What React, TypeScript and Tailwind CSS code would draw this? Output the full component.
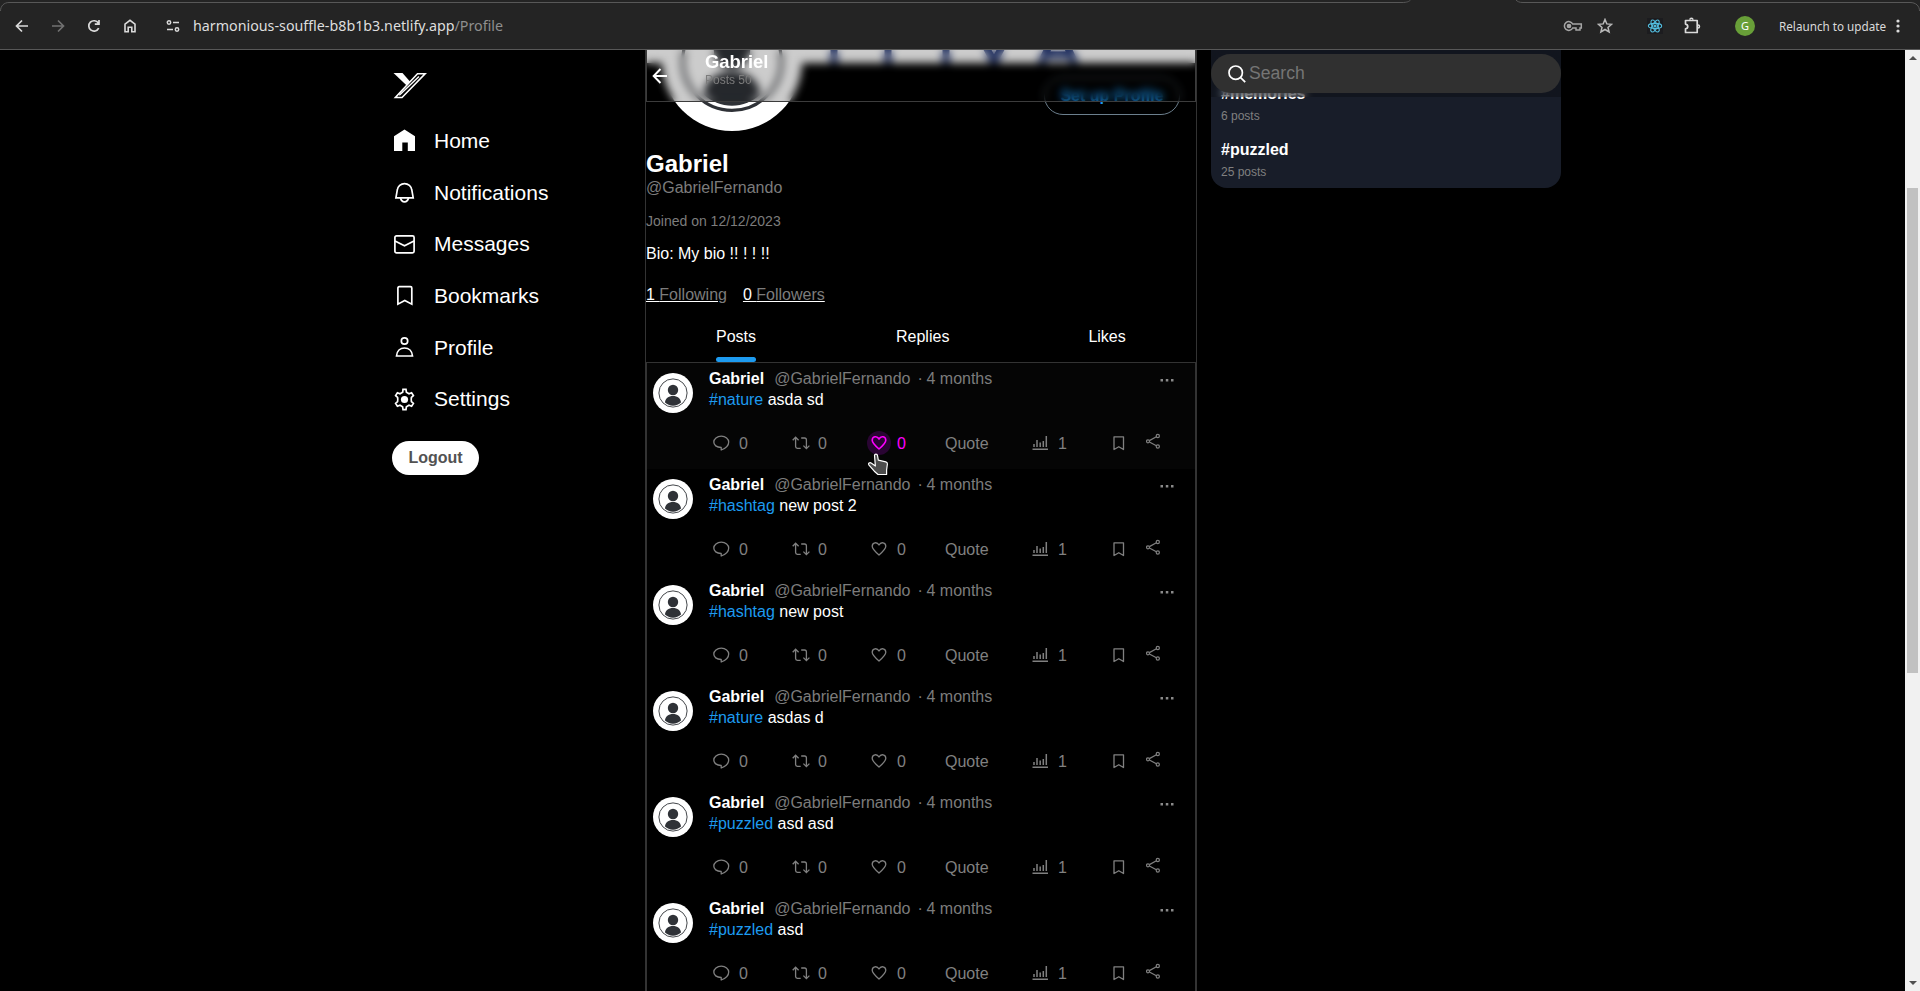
import React from "react";

type Post = { tag: string; text: string; hovered?: boolean };

const posts: Post[] = [
  { tag: "#nature", text: "asda sd", hovered: true },
  { tag: "#hashtag", text: "new post 2" },
  { tag: "#hashtag", text: "new post" },
  { tag: "#nature", text: "asdas d" },
  { tag: "#puzzled", text: "asd asd" },
  { tag: "#puzzled", text: "asd" },
];

function Avatar({ className }: { className: string }) {
  return (
    <svg viewBox="0 0 40 40" className={className}>
      <circle cx="20" cy="20" r="20" fill="#fff" />
      <circle cx="20" cy="20" r="14.1" fill="none" stroke="#2f3237" strokeWidth="0.9" />
      <circle cx="20" cy="17" r="5.2" fill="#2f3237" />
      <path d="M12 29.6C12 25.6 15.6 23 20 23s8 2.6 8 6.6c-2 2-5 3.2-8 3.2s-6-1.200-8-3.200z" fill="#2f3237" />
    </svg>
  );
}

function BrowserBar() {
  return (
    <header className="relative z-30 flex h-[50px] shrink-0 items-center border-b border-[#585858] bg-[#242424] pt-[3px] font-['Noto_Sans',sans-serif] text-[#dadada]">
      <svg className="absolute left-0 top-0" width="1920" height="12" fill="none" stroke="#585858">
        <path d="M0.500 11C0.500 6 4 2.500 9 2.500H1402c5 0 7-1 8.500-2.500M1516 0c1.500 1.500 3 2.500 7 2.500H1910c6 0 9.500 3.500 9.500 8.500" />
      </svg>
      <svg className="ml-3.5" width="16" height="16" viewBox="0 0 16 16" fill="none" stroke="#dadada" strokeWidth="1.7">
        <path d="M14 8H3M8 2.500 2.500 8 8 13.500" />
      </svg>
      <svg className="ml-5" width="16" height="16" viewBox="0 0 16 16" fill="none" stroke="#717171" strokeWidth="1.700">
        <path d="M2 8h11M8 2.500 13.500 8 8 13.500" />
      </svg>
      <svg className="ml-5" width="16" height="16" viewBox="0 0 16 16" fill="none" stroke="#dadada" strokeWidth="1.700">
        <path d="M12.700 10.200A5.200 5.200 0 1 1 12.300 5M13 2v4.200H8.800" />
      </svg>
      <svg className="ml-5" width="16" height="16" viewBox="0 0 16 16" fill="none" stroke="#dadada" strokeWidth="1.600">
        <path d="M3 6.200 8 2.300l5 3.900v7.500H9.800V9.300H6.200v4.400H3z" />
      </svg>
      <svg className="ml-[27px]" width="16" height="16" viewBox="0 0 16 16" fill="none" stroke="#dadada" strokeWidth="1.500">
        <circle cx="4" cy="4.500" r="1.700" />
        <path d="M8 4.500h6M2 11.500h6" />
        <circle cx="12" cy="11.500" r="1.700" />
      </svg>
      <div className="ml-3 whitespace-pre text-[14.270px] leading-5 text-[#dedede]">
        harmonious-souffle-b8b1b3.netlify.app<span className="text-[#8f8f8f]">/Profile</span>
      </div>
      <div className="ml-auto flex items-center">
        <svg width="20" height="16" viewBox="0 0 20 16" fill="none" stroke="#a5a5a5" strokeWidth="1.500">
          <path d="M9.700 6A4.400 4.400 0 1 0 9.700 10H13v2h4v-2h1.300V6z" />
          <circle cx="6" cy="8" r="1.600" fill="#a5a5a5" />
        </svg>
        <svg className="ml-3.5" width="16" height="16" viewBox="0 0 16 16" fill="none" stroke="#b8b8b8" strokeWidth="1.500">
          <path d="m8 1.500 1.800 4.400 4.700.4L11 9.400l1.100 4.600L8 11.500 3.900 14 5 9.400 1.500 6.300l4.700-.4z" />
        </svg>
        <svg className="ml-[34px] bg-[#1c1c1f]" width="16" height="16" viewBox="0 0 16 16" fill="none" stroke="#53bfe0" strokeWidth="1.100">
          <ellipse cx="8" cy="8" rx="6.700" ry="2.600" />
          <ellipse cx="8" cy="8" rx="6.700" ry="2.600" transform="rotate(60 8 8)" />
          <ellipse cx="8" cy="8" rx="6.700" ry="2.600" transform="rotate(120 8 8)" />
          <circle cx="8" cy="8" r="1" fill="#53bfe0" />
        </svg>
        <svg className="ml-5" width="18" height="18" viewBox="0 0 18 18" fill="none" stroke="#dadada" strokeWidth="1.700" strokeLinejoin="round">
          <path d="M2.500 3.500h11.700v12H2.500v-3.600c3-.5 3-4.300 0-4.800z" />
          <path d="M6.900 2.800a1.500 1.500 0 0 1 3 0M15 8a1.500 1.500 0 0 1 0 3" strokeWidth="1.500" />
        </svg>
        <div className="ml-[34px] flex size-5 items-center justify-center rounded-full bg-[#689f38] text-[11px] text-white">G</div>
        <div className="ml-6 w-[107px] whitespace-nowrap text-[11.700px] leading-5">Relaunch to update</div>
        <svg className="ml-2.5 mr-5" width="4" height="16" fill="#dadada">
          <circle cx="2" cy="3" r="1.600" />
          <circle cx="2" cy="8" r="1.600" />
          <circle cx="2" cy="13" r="1.600" />
        </svg>
      </div>
    </header>
  );
}

const navIcons: { label: string; icon: React.ReactNode }[] = [
  { label: "Home", icon: <path d="M1 22V7.300L11.500 0.400 22 7.300V22h-7.200v-8.500H9.300V22z" fill="#fff" stroke="none" /> },
  {
    label: "Notifications",
    icon: (
      <>
        <path d="M4.300 9a7.300 7.300 0 0 1 14.500 0l1.400 7.800H2.900z" />
        <path d="M7.500 17c.6 2.700 2 3.800 4 3.800s3.400-1.100 4-3.800" />
      </>
    ),
  },
  {
    label: "Messages",
    icon: (
      <>
        <rect x="1.900" y="2.800" width="19.200" height="17" rx="1.600" />
        <path d="m2 8 9.500 4.700L21 8" />
      </>
    ),
  },
  { label: "Bookmarks", icon: <path d="M4.900 4q0-1.300 1.300-1.300h11.300q1.300 0 1.300 1.300v16.200l-7-3.700-6.900 3.700z" /> },
  {
    label: "Profile",
    icon: (
      <>
        <circle cx="11.500" cy="5" r="3.200" />
        <path d="M3.500 20c.4-4.900 3.700-8 8-8s7.600 3.100 8 8z" />
      </>
    ),
  },
  {
    label: "Settings",
    icon: (
      <>
        <path d="M9.700 4.300 10 1.400h3l.4 2.900 2.600 1.500 2.600-1.100 1.800 2.900-2 1.900q-.4 2 0 4l2 1.900-1.800 2.900-2.600-1.100-2.600 1.500-.4 2.900h-3l-.4-2.900L7 17.200l-2.600 1.100-1.800-2.900 2-1.900q.4-2 0-4l-2-1.900 1.800-2.900L7 5.800z" />
        <circle cx="11.500" cy="11.500" r="3.600" fill="#fff" stroke="none" />
      </>
    ),
  },
];

function Sidebar() {
  return (
    <nav className="flex w-[253px] shrink-0 flex-col pt-[23px]">
      <svg className="ml-px" width="35" height="26" viewBox="0 0 35 26">
        <path d="M0.500 0h9l7.700 8.700-3.500 3.900z" fill="#fff" />
        <path d="M24.500 0.800h7.600L9 24.500H2.400z" fill="none" stroke="#fff" strokeWidth="1.600" />
        <path d="M26 3.600 6.300 22.300" stroke="#fff" strokeWidth="1.400" />
      </svg>
      <ul className="mt-[16px]">
        {navIcons.map((item) => (
          <li key={item.label} className="flex h-[51.700px] items-center gap-5">
            <svg className="ml-px" width="23" height="23" viewBox="0 0 23 23" fill="none" stroke="#fff" strokeWidth="1.700">
              {item.icon}
            </svg>
            <span className="-ml-[2px] text-[21px] leading-6">{item.label}</span>
          </li>
        ))}
      </ul>
      <button className="mt-[16px] h-[34px] w-[87px] rounded-full bg-white text-base font-bold leading-none text-[#525252]">Logout</button>
    </nav>
  );
}

function PostRow({ post }: { post: Post }) {
  return (
    <article className={post.hovered ? "relative flex h-[106px] bg-[#050505]" : "relative flex h-[106px]"}>
      <Avatar className="ml-[6px] mt-[10px] size-10 shrink-0" />
      <div className="ml-4 flex-1 pt-[5px] leading-[21px]">
        <div className="flex text-[#7c7c7c]">
          <b className="text-white">Gabriel</b>
          <span className="ml-[10px]">@GabrielFernando</span>
          <span className="ml-[7px] w-[9px]">·</span>
          <span>4 months</span>
          <svg className="ml-auto mr-[21px] mt-[9px]" width="14" height="6" fill="#8a8a8a">
            <rect x="0.500" y="2" width="2.500" height="2.500" />
            <rect x="5.800" y="2" width="2.500" height="2.500" />
            <rect x="11" y="2" width="2.500" height="2.500" />
          </svg>
        </div>
        <p>
          <span className="text-[#1d9bf0]">{post.tag}</span> {post.text}
        </p>
        <div className="mt-[21px] grid h-6 grid-cols-[79px_80px_73px_87px_81px_33px_16px] items-center pl-1 text-[#808080]">
          <div className="flex items-center">
            <svg width="17" height="16" viewBox="0 0 17 16" fill="none" stroke="currentColor" strokeWidth="1.300">
              <path d="M8.200 12.500C3.500 12.500 0.800 10 0.800 7S4 1.200 8.300 1.200 15.700 3.800 15.700 7c0 3.500-3.500 6.500-7.500 8z" strokeLinejoin="round" />
            </svg>
            <span className="ml-[9px]">0</span>
          </div>
          <div className="flex items-center">
            <svg width="18" height="16" viewBox="0 0 18 16" fill="none" stroke="currentColor" strokeWidth="1.300">
              <path d="M0.700 5.300 3.600 2.200l3 3.100M3.600 2.500v9q0 1.800 1.800 1.800h3.300M9.200 3h3.300q1.900 0 1.900 1.900v8.400M11.400 10.600l3 3 3-3" />
            </svg>
            <span className="ml-2">0</span>
          </div>
          <div className={post.hovered ? "-ml-[5px] flex items-center text-[#ff00ff]" : "-ml-[5px] flex items-center"}>
            <span className={post.hovered ? "flex size-6 items-center justify-center rounded-full bg-[#2a0533]" : "flex size-6 items-center justify-center"}>
              <svg width="16" height="16" viewBox="0 0 16 16" fill="none" stroke="currentColor" strokeWidth={post.hovered ? 1.6 : 1.3}>
                <path d="M8 14C4 10.600 1.200 8.200 1.200 5.300 1.200 1.400 6 .4 8 4c2-3.600 6.800-2.600 6.800 1.300C14.800 8.200 12 10.600 8 14z" strokeLinejoin="round" />
              </svg>
            </span>
            <span className="ml-1.5">0</span>
          </div>
          <span>Quote</span>
          <div className="flex items-center">
            <svg width="17" height="16" viewBox="0 0 17 16" fill="none" stroke="currentColor" strokeWidth="1.500">
              <path d="M2 9v3M5 5v7M8.200 7.500V12M11.300 6v6M14.300 1v11M0.500 14.300h15.500" />
            </svg>
            <span className="ml-[9px]">1</span>
          </div>
          <svg width="12" height="16" viewBox="0 0 12 16" fill="none" stroke="currentColor" strokeWidth="1.300">
            <path d="M1 1.800h9.500v12.700L5.800 11.700 1 14.500z" strokeLinejoin="round" />
          </svg>
          <svg className="-mt-1" width="15" height="16" viewBox="0 0 15 16" fill="none" stroke="currentColor" strokeWidth="1.200">
            <circle cx="2" cy="8.300" r="1.500" />
            <circle cx="11.800" cy="3" r="1.600" />
            <circle cx="11.800" cy="13.500" r="1.600" />
            <path d="m3.400 7.600 7-3.800M3.400 9l7 3.800" />
          </svg>
        </div>
      </div>
      {post.hovered && (
        <svg className="absolute left-[220px] top-[90px] z-10" width="22" height="23" viewBox="0 0 22 23">
          <path
            d="M7.500 2.500C7.500 0.600 10.300 0.600 10.500 2.500L11.300 7.200 18.800 8.800Q20.500 9.300 20.400 11L19.600 17v4.500H11L7.300 18.200 2 12.200C0.600 10.300 2.800 9 4.500 10.200L8.400 13z"
            fill="#4d4d4d"
            stroke="#fff"
            strokeWidth="1.200"
            strokeLinejoin="round"
          />
        </svg>
      )}
    </article>
  );
}

function Feed() {
  return (
    <main className="relative w-[552px] shrink-0 border-x border-[#333333]">
      <div className="absolute inset-x-0 top-0 z-20 flex h-[52px] border border-t-0 border-[#3c3c3c] bg-black/20 backdrop-blur-[4px]">
        <svg className="ml-[5px] mt-[18px]" width="16" height="16" viewBox="0 0 16 16" fill="none" stroke="#fff" strokeWidth="2">
          <path d="M15 8H2M8.500 1 1.700 8l6.800 7" />
        </svg>
        <div className="ml-[37px]">
          <div className="mt-px text-[18.400px] font-bold leading-[22px]">Gabriel</div>
          <div className="text-xs leading-[14px] text-[#7c7c7c]">Posts 50</div>
        </div>
      </div>

      <div className="h-[13px] overflow-hidden bg-white">
        <svg width="550" height="13" fill="none" stroke="#1f3371" strokeWidth="7">
          <path d="M188 0v13M242 0v13M300 0v13M334-14 348 12 362-14M395 13 405-8M429 13 419-8M398 5h28" />
        </svg>
      </div>
      <div className="flex h-[68px] justify-between">
        <Avatar className="-mt-[72px] ml-4 size-[140px]" />
        <button className="mr-[16px] mt-[14px] h-[38px] w-[136px] rounded-full border border-[#6c7f8d] text-base font-bold text-[#1d9bf0]">Set up Profile</button>
      </div>
      <h1 className="mt-[19px] text-2xl font-bold leading-7">Gabriel</h1>
      <p className="leading-5 text-[#7c7c7c]">@GabrielFernando</p>
      <p className="mt-[15px] text-sm leading-4 text-[#7c7c7c]">Joined on 12/12/2023</p>
      <p className="mt-[15px] leading-5">Bio: My bio !! ! ! !!</p>
      <div className="mt-[21px] flex gap-4 leading-5">
        <span className="underline">1 <span className="text-[#7c7c7c]">Following</span></span>
        <span className="underline">0 <span className="text-[#7c7c7c]">Followers</span></span>
      </div>
      <div className="mt-[22px] flex h-[35px] leading-5">
        <div className="ml-[70px] flex flex-col justify-between">
          Posts
          <span className="h-[5px] rounded-full bg-[#1d9bf0]" />
        </div>
        <div className="ml-[140px]">Replies</div>
        <div className="ml-[139px]">Likes</div>
      </div>
      <section className="border border-b-0 border-[#333333]">
        {posts.map((post, i) => (
          <PostRow key={i} post={post} />
        ))}
      </section>
    </main>
  );
}

function Trends() {
  return (
    <aside className="relative ml-[14px] h-[138px] w-[350px] rounded-b-2xl bg-[#181d29] px-2.5 pt-[34px]">
      <div className="absolute inset-x-0 top-0 z-10 h-[47px] bg-black/25 pt-1 backdrop-blur-[4px]">
        <div className="flex h-[39px] items-center rounded-full bg-[#303030] pl-[17px] text-[17.600px] text-[#757575]">
          <svg className="mr-[3px]" width="18" height="18" viewBox="0 0 18 18" fill="none" stroke="#fff" strokeWidth="1.700">
            <circle cx="7.700" cy="7.700" r="6.700" />
            <path d="m12.400 12.400 4.800 4.800" />
          </svg>
          Search
        </div>
      </div>
      <div className="font-bold leading-5">#memories</div>
      <div className="mt-1 text-xs leading-4 text-[#808080]">6 posts</div>
      <div className="mt-4 font-bold leading-5">#puzzled</div>
      <div className="mt-1 text-xs leading-4 text-[#808080]">25 posts</div>
    </aside>
  );
}

function Scrollbar() {
  return (
    <div className="ml-auto flex w-[15px] flex-col items-center bg-[#f1f1f1] py-1.5">
      <svg width="8" height="4" fill="#505050"><path d="M0 4 4 0l4 4z" /></svg>
      <div className="mt-[128px] h-[485px] w-[11px] bg-[#c1c1c1]" />
      <svg className="mt-auto" width="8" height="4" fill="#505050"><path d="M0 0l4 4 4-4z" /></svg>
    </div>
  );
}

export default function App() {
  return (
    <div className="flex h-[991px] w-[1920px] flex-col overflow-hidden bg-black font-['Liberation_Sans',Arial,sans-serif] text-base text-white">
      <BrowserBar />
      <div className="flex h-[941px] overflow-hidden pl-[392px]">
        <Sidebar />
        <Feed />
        <Trends />
        <Scrollbar />
      </div>
    </div>
  );
}
